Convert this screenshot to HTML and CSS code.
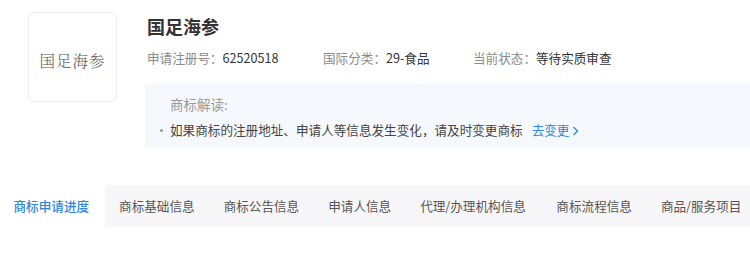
FILE: index.html
```html
<!DOCTYPE html>
<html lang="zh-CN">
<head>
<meta charset="utf-8">
<title>国足海参</title>
<link rel="stylesheet" href="styles.css">
</head>
<body>
<div class="header">
  <div class="logo"><span>国足海参</span></div>
  <div class="main">
    <h1 class="title">国足海参</h1>
    <div class="meta">
      <div class="meta-item w1"><span class="label">申请注册号：</span><span class="value">62520518</span></div>
      <div class="meta-item w2"><span class="label">国际分类：</span><span class="value">29-食品</span></div>
      <div class="meta-item"><span class="label">当前状态：</span><span class="value">等待实质审查</span></div>
    </div>
    <div class="notice">
      <div class="notice-title">商标解读:</div>
      <div class="notice-item">如果商标的注册地址、申请人等信息发生变化，请及时变更商标<a class="link" href="#">去变更<svg class="chev" width="7" height="10" viewBox="0 0 7 10"><path d="M1.5 1 L5.5 5 L1.5 9" fill="none" stroke="currentColor" stroke-width="1.3"/></svg></a></div>
    </div>
  </div>
</div>
<div class="tabs">
  <div class="tab active">商标申请进度</div>
  <div class="tab">商标基础信息</div>
  <div class="tab">商标公告信息</div>
  <div class="tab">申请人信息</div>
  <div class="tab wide">代理/办理机构信息</div>
  <div class="tab">商标流程信息</div>
  <div class="tab">商品/服务项目</div>
</div>
</body>
</html>
```
FILE: styles.css
```css
* { box-sizing: border-box; }
body {
  margin: 0;
  background: #fff;
  font-family: "Noto Sans CJK SC", "Noto Sans", sans-serif;
  color: #333;
  overflow: hidden;
}
.header {
  display: flex;
  padding: 12px 0 0 28px;
  gap: 28px;
}
.logo {
  width: 89px;
  height: 90px;
  flex: none;
  border: 1px solid #ececec;
  border-radius: 6px;
  display: flex;
  align-items: center;
  justify-content: center;
}
.logo span {
  font-family: "Noto Serif CJK SC", "Noto Serif", serif;
  font-size: 15.5px;
  font-weight: 300;
  color: #555;
  letter-spacing: 1px;
  margin-top: 6px;
}
.main {
  flex: 1;
  min-width: 0;
}
.title {
  margin: 0 0 0 2px;
  font-size: 18px;
  line-height: 28px;
  font-weight: 700;
  color: #333;
}
.meta {
  display: flex;
  margin: 8px 0 0 2px;
  font-size: 12.6px;
  line-height: 20px;
}
.w1 { width: 176px; }
.w2 { width: 150px; }
.label { color: #8a8a8a; }
.value { color: #333; }
.notice {
  margin-top: 15px;
  background: #f5f9fe;
  padding: 11px 0 8px 15px;
  font-size: 12.6px;
  line-height: 20px;
}
.notice-title {
  color: #9a9a9a;
  font-size: 13.5px;
  padding-left: 10px;
}
.notice-item {
  margin-top: 6px;
  color: #444;
  position: relative;
  padding-left: 10px;
  white-space: nowrap;
}
.notice-item::before {
  content: "";
  position: absolute;
  left: 0;
  top: 9px;
  width: 3px;
  height: 3px;
  border-radius: 50%;
  background: #999;
}
.link {
  color: #2f86e4;
  text-decoration: none;
  margin-left: 9px;
}
.chev {
  margin-left: 3px;
  vertical-align: -1px;
}
.tabs {
  margin-top: 37px;
  display: flex;
  height: 42px;
  background: #f7f7f9;
  font-size: 12.6px;
  white-space: nowrap;
}
.tab {
  padding: 0 14.5px;
  line-height: 42px;
  color: #555;
  flex: none;
}
.tab.active {
  padding-left: 13.5px;
  padding-right: 15.5px;
  background: #fff;
  color: #2f86e4;
  font-weight: 500;
}
.tab.wide { padding-right: 16px; }
```
